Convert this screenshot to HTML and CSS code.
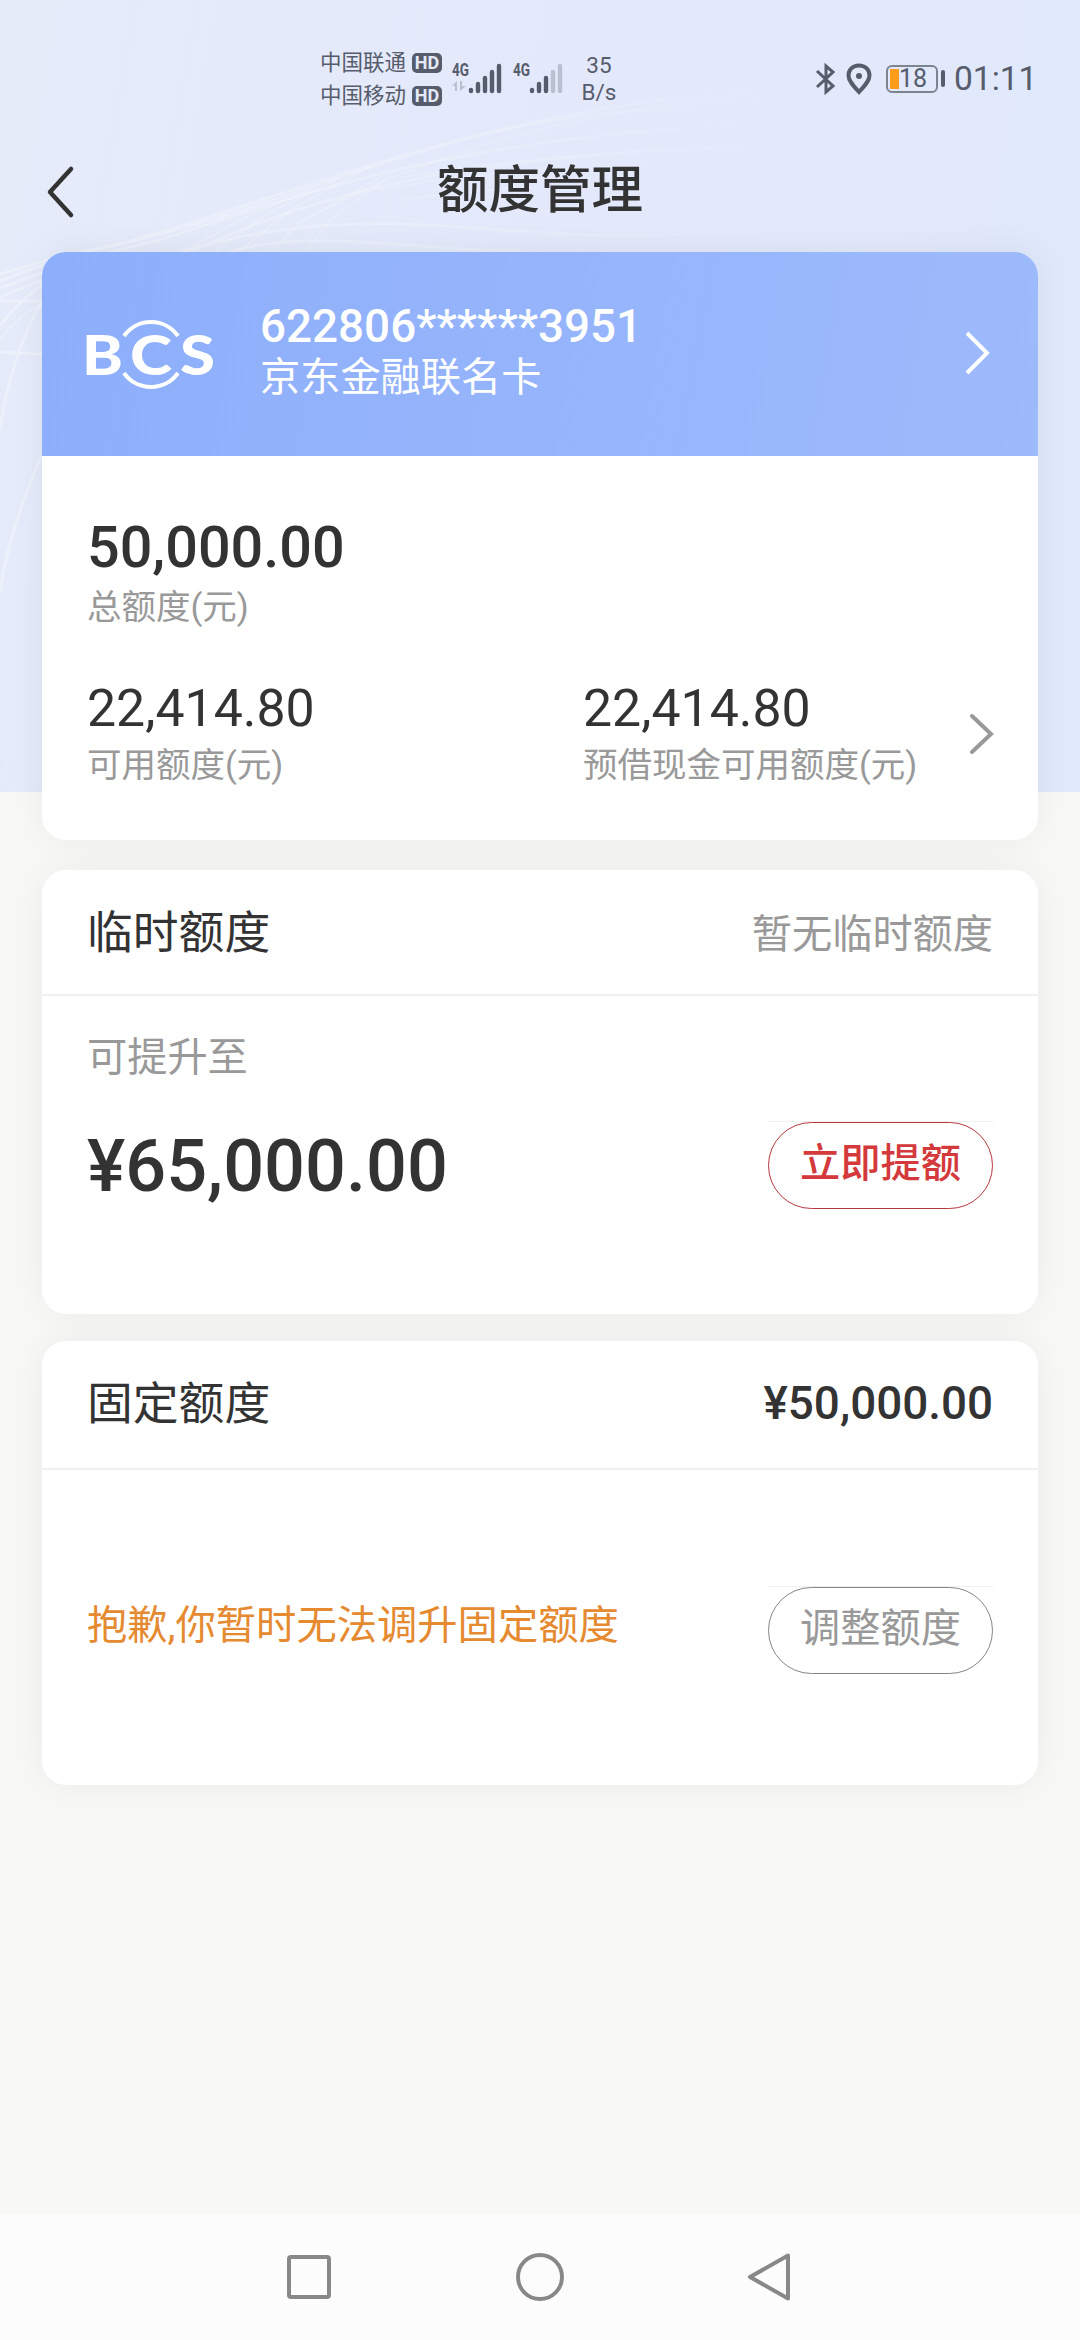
FILE: index.html
```html
<!DOCTYPE html>
<html lang="zh-CN">
<head>
	<meta charset="UTF-8">
	<title>额度管理</title>
	<link rel="stylesheet" href="styles.css">
</head>
<body>
	<div class="page">
		<!-- 顶部波纹背景 -->
		<svg class="wave" width="1080" height="792" viewBox="0 0 1080 792">
			<defs>
				<linearGradient id="fade" gradientUnits="userSpaceOnUse" x1="0" y1="0" x2="1080" y2="0">
					<stop offset="0" stop-color="#fff"/>
					<stop offset=".4" stop-color="#fff" stop-opacity=".7"/>
					<stop offset=".8" stop-color="#fff" stop-opacity="0"/>
				</linearGradient>
			</defs>
			<g class="wave-strong">
				<path d="M0 274 Q60 256 110 246 C300 205 420 130 620 112 S900 82 1080 92"/>
				<path d="M0 281 Q70 254 120 244 C290 196 420 136 640 103 S900 98 1080 110"/>
				<path d="M0 288 Q80 258 160 240 C310 190 440 148 660 130 S900 118 1080 130"/>
				<path d="M0 298 Q70 262 190 252 C310 196 450 160 680 150 S900 138 1080 150"/>
				<path d="M180 252 C250 232 310 222 400 224 S560 240 700 234 S860 220 940 214"/>
				<path d="M230 252 C280 236 340 240 420 246 S480 250 520 251"/>
				<path d="M0 301 H40"/>
				<path d="M42 300 C20 340 5 390 0 430"/>
				<path d="M0 352 L42 354"/>
				<path d="M42 455 C22 500 6 550 0 592"/>
				<path d="M0 326 Q20 300 42 285"/>
			</g>
			<g class="wave-thin">
				<path d="M185 251 L250 215 L310 190"/>
				<path d="M215 251 L270 212 L340 178"/>
				<path d="M240 251 L290 210 L370 166"/>
				<path d="M272 251 L300 222 L380 178"/>
				<path d="M306 251 L330 220 L390 176"/>
				<path d="M0 340 Q18 315 42 304"/>
				<path d="M300 222 C450 140 620 100 860 84"/>
				<path d="M380 190 C520 160 700 168 940 160"/>
				<path d="M400 200 C540 178 700 186 940 180"/>
				<path d="M400 178 C560 150 740 140 1000 150"/>
			</g>
		</svg>

		<div class="status">
			<div class="carriers">
				<div class="carrier">中国联通<span class="hd">HD</span></div>
				<div class="carrier">中国移动<span class="hd">HD</span></div>
			</div>
			<svg class="signal" width="52" height="34" viewBox="0 0 52 34">
				<text class="net" x="0" y="16" textLength="17" lengthAdjust="spacingAndGlyphs">4G</text>
				<path class="dim" d="M0 26 L5 21 V31 H3 V26 Z M8 21 H10 V26 H14 L8 31 Z"/>
				<path class="bars" d="M19 30 V31 M26 24 V31 M33 18 V31 M40 12 V31 M47 6 V31"/>
			</svg>
			<svg class="signal second" width="52" height="34" viewBox="0 0 52 34">
				<text class="net" x="0" y="16" textLength="17" lengthAdjust="spacingAndGlyphs">4G</text>
				<path class="bars" d="M19 30 V31 M26 24 V31 M33 18 V31"/>
				<path class="bars light" d="M40 12 V31 M47 6 V31"/>
			</svg>
			<div class="speed">
				<div>35</div>
				<div>B/s</div>
			</div>
			<div class="right">
				<svg class="bt" width="21" height="32" viewBox="0 0 21 32">
					<path d="M2 8 L18 23 L11 29 V3 L18 9 L2 24"/>
				</svg>
				<svg class="pin" width="26" height="32" viewBox="0 0 26 32">
					<path d="M13 2.5 C6.5 2.5 2.5 7 2.5 12.5 C2.5 18 8 23.5 13 29 C18 23.5 23.5 18 23.5 12.5 C23.5 7 19.5 2.5 13 2.5 Z"/>
					<circle cx="13" cy="13" r="3"/>
				</svg>
				<div class="battery"><i></i><span>18</span></div>
				<b class="tip"></b>
				<div class="time">01:11</div>
			</div>
		</div>

		<div class="title">
			<svg class="back" width="30" height="54" viewBox="0 0 30 54">
				<path d="M26 4 L5 27 L26 50"/>
			</svg>
			<h1>额度管理</h1>
		</div>

		<div class="card account">
			<div class="bank">
				<svg class="logo" width="130" height="72" viewBox="0 0 130 72">
					<path d="M37 18 A33 33 0 0 1 91 18 M37 55 A33 33 0 0 0 91 55"/>
					<text x="-5" y="57" textLength="41" lengthAdjust="spacingAndGlyphs">B</text>
					<text x="43" y="57" textLength="42" lengthAdjust="spacingAndGlyphs">C</text>
					<text x="93" y="57" textLength="35" lengthAdjust="spacingAndGlyphs">S</text>
				</svg>
				<div class="bank-text">
					<div class="number">622806******3951</div>
					<div class="name">京东金融联名卡</div>
				</div>
				<svg class="arrow" width="28" height="46" viewBox="0 0 28 46">
					<path d="M3 2 L23 22 L3 42"/>
				</svg>
			</div>
			<div class="quota">
				<div class="total">50,000.00</div>
				<div class="label">总额度(元)</div>
				<div class="cols">
					<div>
						<div class="num">22,414.80</div>
						<div class="label">可用额度(元)</div>
					</div>
					<div>
						<div class="num">22,414.80</div>
						<div class="label">预借现金可用额度(元)</div>
					</div>
					<svg class="arrow grey" width="26" height="44" viewBox="0 0 26 44">
						<path d="M5 4 L24 22 L5 40"/>
					</svg>
				</div>
			</div>
		</div>

		<div class="card temp">
			<div class="head"><span class="name-text">临时额度</span><span class="none">暂无临时额度</span></div>
			<div class="tip-text">可提升至</div>
			<div class="row">
				<div class="up">¥65,000.00</div>
				<div class="btn-box"><div class="btn red">立即提额</div></div>
			</div>
		</div>

		<div class="card fixed">
			<div class="head"><span class="name-text">固定额度</span><span class="money">¥50,000.00</span></div>
			<div class="row">
				<div class="sorry">抱歉,你暂时无法调升固定额度</div>
				<div class="btn-box"><div class="btn">调整额度</div></div>
			</div>
		</div>

		<div class="nav">
			<svg width="50" height="50" viewBox="0 0 50 50"><rect x="5" y="5" width="40" height="40" rx="2"/></svg>
			<svg width="50" height="50" viewBox="0 0 50 50"><circle cx="25" cy="25" r="22"/></svg>
			<svg width="50" height="50" viewBox="0 0 50 50"><path d="M42 3.5 V46.5 L4 25 Z"/></svg>
		</div>
	</div>
</body>
</html>
```
FILE: styles.css
```css
*{
	margin: 0;
	padding: 0;
	box-sizing: border-box;
}
body{
	background: #f8f8f6;
	font-family: Roboto, "Noto Sans CJK SC", sans-serif;
	color: #333;
}
svg{
	display: block;
	flex: none;
	fill: none;
	overflow: visible;
}
.page{
	position: relative;
	width: 1080px;
	height: 2340px;
	display: flex;
	flex-direction: column;
	overflow: hidden;
}
/* 背景 */
.wave{
	position: absolute;
	top: 0;
	left: 0;
	z-index: -1;
	background: linear-gradient(100deg, #e5ebf9 0%, #e3e9fb 55%, #dfe9fb 100%);
}
.wave path{
	stroke: url(#fade);
}
.wave-strong{
	opacity: .3;
	stroke-width: 3;
}
.wave-thin{
	opacity: .24;
	stroke-width: 2;
}
/* 状态栏 */
.status{
	height: 140px;
	padding: 46px 46px 0 320px;
	display: flex;
	color: #565c6b;
}
.carrier{
	height: 33px;
	line-height: 33px;
	font-size: 21.5px;
	display: flex;
	align-items: center;
}
.hd{
	width: 30px;
	height: 20px;
	margin-left: 6px;
	border-radius: 5px;
	background: #565c6b;
	color: #e4eafa;
	font-size: 18px;
	font-weight: 700;
	line-height: 20px;
	text-align: center;
}
.signal{
	margin: 14px 0 0 10px;
}
.signal.second{
	margin-left: 9px;
}
.net{
	font-size: 18px;
	font-weight: 700;
	fill: #565c6b;
}
.bars{
	stroke: #565c6b;
	stroke-width: 4.4;
	stroke-linecap: round;
}
.light{
	stroke: #b9c0d0;
}
.dim{
	fill: #b9c0d0;
}
.speed{
	width: 50px;
	margin: 6px 0 0 9px;
	font-size: 22.5px;
	line-height: 27px;
	text-align: center;
}
.right{
	margin-left: auto;
	height: 65px;
	display: flex;
	align-items: center;
}
.bt path{
	stroke: #565c6b;
	stroke-width: 3;
}
.pin{
	margin-left: 10px;
}
.pin path{
	stroke: #565c6b;
	stroke-width: 4;
}
.pin circle{
	fill: #565c6b;
}
.battery{
	width: 52px;
	height: 28px;
	margin-left: 14px;
	padding: 0 2px;
	border: 2px solid #7d8391;
	border-radius: 6px;
	display: flex;
	align-items: center;
	font-size: 25px;
	line-height: 24px;
}
.battery i{
	width: 9px;
	height: 20px;
	background: #ff9c1a;
}
.tip{
	width: 4px;
	height: 17px;
	margin: 0 9px 0 3px;
	border-radius: 2px;
	background: #565c6b;
}
.time{
	width: 80px;
	font-size: 33.5px;
}
/* 标题 */
.title{
	height: 112px;
	padding: 0 45px;
	display: flex;
	align-items: flex-start;
}
.title h1{
	flex: 1;
	margin-right: 30px;
	font-size: 51.5px;
	font-weight: 500;
	line-height: 102px;
	text-align: center;
}
.back{
	margin-top: 25px;
}
.back path{
	stroke: #333;
	stroke-width: 4.5;
	stroke-linecap: round;
	stroke-linejoin: round;
}
/* 卡片 */
.card{
	flex: none;
	margin: 0 42px;
	border-radius: 24px;
	background: #fff;
	box-shadow: 0 0 36px rgba(0, 0, 0, .06);
}
.account{
	height: 588px;
}
.bank{
	height: 204px;
	padding: 0 46px 0 45px;
	border-radius: 24px 24px 0 0;
	background: linear-gradient(100deg, #8daefb, #9dbafb);
	display: flex;
	align-items: center;
	color: #fff;
}
.logo path{
	stroke: #fff;
	stroke-width: 4;
}
.logo text{
	fill: #fff;
	font-family: Lato, sans-serif;
	font-size: 56px;
	font-weight: 900;
}
.bank-text{
	flex: 1;
	margin: -3px 0 0 43px;
}
.number{
	font-size: 45.8px;
	font-weight: 500;
	line-height: 50px;
}
.name{
	font-size: 40.2px;
	line-height: 52px;
}
.arrow path{
	stroke: #fff;
	stroke-width: 4;
}
.arrow.grey path{
	stroke: #999;
	stroke-linecap: round;
}
.quota{
	padding: 57px 45px 0;
}
.total{
	font-size: 57.5px;
	font-weight: 500;
	line-height: 69px;
}
.label{
	color: #999;
	font-size: 34.5px;
	line-height: 50px;
}
.cols{
	margin-top: 46px;
	display: grid;
	grid-template-columns: 496px 1fr auto;
	align-items: center;
}
.num{
	font-size: 51.8px;
	line-height: 61px;
}
.cols .label{
	margin-top: 1px;
}
.temp{
	height: 444px;
	margin-top: 30px;
}
.head{
	height: 126px;
	padding: 0 45px;
	border-bottom: 2px solid #f0f0f0;
	display: flex;
	align-items: center;
	justify-content: space-between;
	font-size: 45.8px;
	line-height: 60px;
}
.name-text{
	margin-top: 3px;
}
.none{
	color: #999;
	font-size: 40.2px;
	margin-top: 6px;
}
.tip-text{
	margin-top: 37px;
	padding-left: 45px;
	color: #999;
	font-size: 40.2px;
	line-height: 50px;
}
.row{
	margin-top: 38px;
	padding: 0 45px;
	display: flex;
	align-items: center;
	justify-content: space-between;
}
.up{
	font-size: 72px;
	font-weight: 500;
	line-height: 80px;
	margin-top: 3px;
}
.btn-box{
	border-top: 1px solid #f0f0f0;
}
.btn{
	width: 225px;
	height: 87px;
	border: 1px solid #858585;
	border-radius: 44px;
	color: #999;
	font-size: 40.2px;
	line-height: 82px;
	text-align: center;
}
.btn.red{
	border-color: #b8383e;
	color: #d43a3c;
	font-weight: 500;
}
.fixed{
	height: 444px;
	margin-top: 27px;
}
.fixed .head{
	height: 129px;
}
.fixed .name-text{
	margin-top: 0;
}
.money{
	margin-top: -1px;
	font-weight: 500;
}
.fixed .row{
	margin-top: 116px;
}
.sorry{
	margin-top: -8px;
	color: #e58a30;
	font-size: 40.3px;
	line-height: 50px;
}
/* 导航键 */
.nav{
	height: 126px;
	margin-top: auto;
	padding: 0 284px;
	background: #fcfcfc;
	display: flex;
	align-items: center;
	justify-content: space-between;
}
.nav svg{
	stroke: #888;
	stroke-width: 4;
	stroke-linejoin: round;
}
```
